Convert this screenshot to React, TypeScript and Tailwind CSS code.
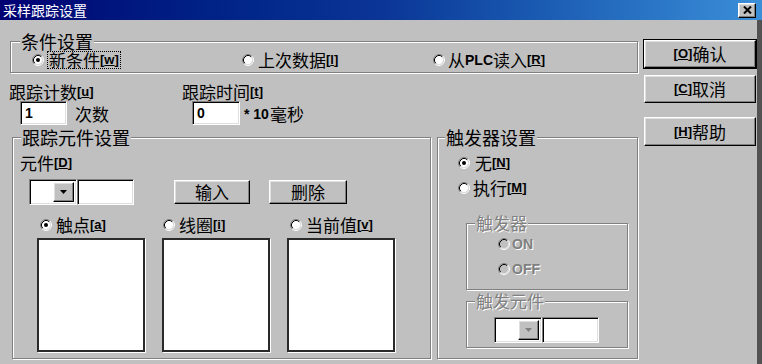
import React from "react";

const groupCls =
  "border border-[#808080] shadow-[inset_1px_1px_0_#fff,1px_1px_0_#fff] min-w-0";
const legendCls = "bg-[#c0c0c0] px-[1px] text-[17px] leading-[18px]";
const sunken =
  "bg-white border border-t-[#808080] border-l-[#808080] border-b-white border-r-white shadow-[inset_1px_1px_0_#000,inset_-1px_-1px_0_#dfdfdf]";
const raised =
  "bg-[#c0c0c0] border border-t-white border-l-white border-b-black border-r-black shadow-[inset_-1px_-1px_0_#808080,inset_1px_1px_0_#dfdfdf]";
const disabledText = "text-[#808080] [text-shadow:1px_1px_0_#fff]";

function Radio({ checked, disabled }: { checked?: boolean; disabled?: boolean }) {
  return (
    <svg width="12" height="12" viewBox="0 0 12 12" className="shrink-0">
      <circle cx="6" cy="6" r="4.2" fill={disabled ? "#c0c0c0" : "#fff"} />
      <path d="M2.11 9.89 A5.5 5.5 0 0 1 9.89 2.11" fill="none" stroke="#808080" strokeWidth="1" />
      <path d="M9.89 2.11 A5.5 5.5 0 0 1 2.11 9.89" fill="none" stroke="#fff" strokeWidth="1" />
      <path d="M2.82 9.18 A4.5 4.5 0 0 1 9.18 2.82" fill="none" stroke="#000" strokeWidth="1" />
      <path d="M9.18 2.82 A4.5 4.5 0 0 1 2.82 9.18" fill="none" stroke="#dfdfdf" strokeWidth="1" />
      {checked && <circle cx="6" cy="6" r="2" fill="#000" />}
    </svg>
  );
}

function Key({ k, disabled }: { k: string; disabled?: boolean }) {
  return (
    <span
      className={
        "font-['Liberation_Sans',sans-serif] font-bold text-[13px] leading-[14px] " +
        (disabled ? disabledText : "")
      }
    >
      [<span className="underline underline-offset-1">{k}</span>]
    </span>
  );
}

function Arrow({ disabled }: { disabled?: boolean }) {
  return (
    <svg width="7" height="4" viewBox="0 0 7 4">
      <path d="M0 0 H7 L3.5 4 Z" fill={disabled ? "#808080" : "#000"} />
    </svg>
  );
}

function Combo({ disabled }: { disabled?: boolean }) {
  return (
    <div className="flex h-[26px]">
      <div className={sunken + " w-[48px] h-full flex justify-end items-stretch p-[2px]"}>
        <div className={raised + " w-[21px] flex items-center justify-center"}>
          <Arrow disabled={disabled} />
        </div>
      </div>
      <div className={sunken + " w-[57px] h-full"} />
    </div>
  );
}

function Btn({
  children,
  className,
}: {
  children: React.ReactNode;
  className?: string;
}) {
  return (
    <div className={raised + " flex items-center justify-center " + (className ?? "")}>
      {children}
    </div>
  );
}

export default function App() {
  return (
    <div className="w-[762px] h-[364px] bg-[#c0c0c0] overflow-hidden flex flex-col font-['Noto_Sans_CJK_SC','Liberation_Sans',sans-serif] text-black select-none">
      {/* Title bar */}
      <div className="h-[20px] shrink-0 flex items-center bg-gradient-to-r from-[#000073] via-[#0b3596] to-[#3b8fd9] pl-[3px] pr-[6px]">
        <span className="text-white text-[14px] leading-[16px]">采样跟踪设置</span>
        <div className={raised + " ml-auto w-[18px] h-[15px] flex items-center justify-center"}>
          <svg width="9" height="8" viewBox="0 0 9 8">
            <path d="M1 0.5 L8 7.5 M8 0.5 L1 7.5" stroke="#000" strokeWidth="2" />
          </svg>
        </div>
      </div>

      {/* Body */}
      <div className="flex flex-1 border-r-[5px] border-r-[#525252]">
        {/* Left column */}
        <div className="w-[643px] shrink-0 flex flex-col">
          {/* 条件设置 */}
          <fieldset className={groupCls + " ml-[10px] mt-[12px] w-[628px] pb-[3px]"}>
            <legend className={legendCls + " ml-[9px] text-[18px] leading-[16px]"}>条件设置</legend>
            <div className="mt-[1px] flex items-center h-[18px] pl-[21px] text-[17px] leading-[16px]">
              <div className="w-[210px] flex items-center gap-[3px]">
                <Radio checked />
                <span className="border border-dotted border-black px-[1px] h-[18px] leading-[16px] flex items-center">
                  新条件<Key k="w" />
                </span>
              </div>
              <div className="w-[191px] flex items-center gap-[4px]">
                <Radio />
                <span className="flex items-center">
                  上次数据<Key k="l" />
                </span>
              </div>
              <div className="flex items-center gap-[3px]">
                <Radio />
                <span className="flex items-center">
                  从<span className="font-['Liberation_Sans',sans-serif] font-bold text-[14px]">PLC</span>读入
                  <Key k="R" />
                </span>
              </div>
            </div>
          </fieldset>

          {/* counts */}
          <div className="flex mt-[10px] pl-[9px] text-[17px] leading-[18px]">
            <div className="w-[173px] flex flex-col">
              <div className="h-[18px] flex items-center">
                跟踪计数<Key k="u" />
              </div>
              <div className="flex items-center ml-[11px]">
                <div className={sunken + " w-[47px] h-[24px] flex items-center pl-[4px]"}>
                  <span className="font-['Liberation_Sans',sans-serif] font-bold text-[14px]">1</span>
                </div>
                <span className="ml-[8px] mt-[2px]">次数</span>
              </div>
            </div>
            <div className="flex flex-col">
              <div className="h-[18px] flex items-center">
                跟踪时间<Key k="t" />
              </div>
              <div className="flex items-center ml-[10px]">
                <div className={sunken + " w-[48px] h-[24px] flex items-center pl-[4px]"}>
                  <span className="font-['Liberation_Sans',sans-serif] font-bold text-[14px]">0</span>
                </div>
                <span className="ml-[4px] mt-[2px] flex items-center">
                  <span className="font-['Liberation_Sans',sans-serif] font-bold text-[14px] mr-[1px]">* 10</span>
                  毫秒
                </span>
              </div>
            </div>
          </div>

          {/* bottom groups */}
          <div className="flex items-start mt-[3px]">
            {/* 跟踪元件设置 */}
            <fieldset className={groupCls + " ml-[12px] w-[419px] pb-[6px]"}>
              <legend className={legendCls + " ml-[8px] text-[18px]"}>跟踪元件设置</legend>
              <div className="mt-[8px] h-[18px] pl-[7px] flex items-center text-[17px]">
                元件<Key k="D" />
              </div>
              <div className="mt-[7px] h-[26px] pl-[16px] flex items-center">
                <Combo />
                <Btn className="ml-[40px] w-[76px] h-[24px] text-[17px]">输入</Btn>
                <Btn className="ml-[19px] w-[78px] h-[24px] text-[17px]">删除</Btn>
              </div>
              <div className="mt-[11px] h-[18px] pl-[27px] flex items-center text-[17px]">
                <div className="w-[123px] flex items-center gap-[4px]">
                  <Radio checked />
                  <span className="flex items-center">
                    触点<Key k="a" />
                  </span>
                </div>
                <div className="w-[127px] flex items-center gap-[4px]">
                  <Radio />
                  <span className="flex items-center">
                    线圈<Key k="i" />
                  </span>
                </div>
                <div className="flex items-center gap-[4px]">
                  <Radio />
                  <span className="flex items-center">
                    当前值<Key k="v" />
                  </span>
                </div>
              </div>
              <div className="mt-[4px] pl-[24px] flex gap-[17px]">
                <div className="w-[108px] h-[114px] bg-white border-2 border-[#2a2a2a] shadow-[1px_1px_0_#fff]" />
                <div className="w-[108px] h-[114px] bg-white border-2 border-[#2a2a2a] shadow-[1px_1px_0_#fff]" />
                <div className="w-[108px] h-[114px] bg-white border-2 border-[#2a2a2a] shadow-[1px_1px_0_#fff]" />
              </div>
            </fieldset>

            {/* 触发器设置 */}
            <fieldset className={groupCls + " ml-[6px] w-[201px] pb-[10px]"}>
              <legend className={legendCls + " ml-[7px] text-[18px]"}>触发器设置</legend>
              <div className="mt-[8px] h-[18px] pl-[20px] flex items-center gap-[5px] text-[17px]">
                <Radio checked />
                <span className="flex items-center">
                  无<Key k="N" />
                </span>
              </div>
              <div className="mt-[7px] h-[18px] pl-[20px] flex items-center gap-[3px] text-[17px]">
                <Radio />
                <span className="flex items-center">
                  执行<Key k="M" />
                </span>
              </div>

              <fieldset className={groupCls + " ml-[28px] mt-[17px] w-[162px] pb-[11px]"}>
                <legend className={legendCls + " ml-[8px] " + disabledText}>触发器</legend>
                <div className="mt-[3px] h-[18px] pl-[31px] flex items-center gap-[2px]">
                  <Radio disabled />
                  <span className={"font-['Liberation_Sans',sans-serif] font-bold text-[14px] " + disabledText}>ON</span>
                </div>
                <div className="mt-[7px] h-[18px] pl-[31px] flex items-center gap-[2px]">
                  <Radio disabled />
                  <span className={"font-['Liberation_Sans',sans-serif] font-bold text-[14px] " + disabledText}>OFF</span>
                </div>
              </fieldset>

              <fieldset className={groupCls + " ml-[28px] mt-[2px] w-[162px] pb-[4px]"}>
                <legend className={legendCls + " ml-[8px] " + disabledText}>触发元件</legend>
                <div className="mt-[7px] pl-[27px] flex">
                  <Combo disabled />
                </div>
              </fieldset>
            </fieldset>
          </div>
        </div>

        {/* Right buttons */}
        <div className="flex-1 flex flex-col pt-[19px] text-[17px] leading-[18px]">
          <div className="w-[114px] h-[30px] border border-black flex">
            <Btn className="flex-1">
              <Key k="O" />
              确认
            </Btn>
          </div>
          <Btn className="mt-[6px] ml-[1px] w-[112px] h-[28px]">
            <Key k="C" />
            取消
          </Btn>
          <Btn className="mt-[14px] ml-[1px] w-[112px] h-[29px]">
            <Key k="H" />
            帮助
          </Btn>
        </div>
      </div>
    </div>
  );
}
